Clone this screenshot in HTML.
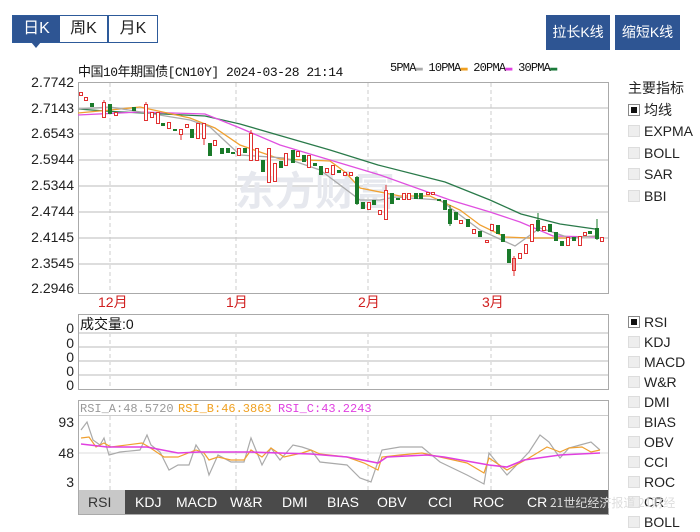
<!DOCTYPE html><html><head><meta charset="utf-8"><style>
body{margin:0;width:700px;height:532px;background:#fff;position:relative;overflow:hidden;font-family:"Liberation Sans","Noto Sans CJK SC",sans-serif;}
.a{position:absolute;white-space:nowrap}
.tab{position:absolute;top:15px;height:26px;border:1px solid #2d5a9a;background:#fff;color:#222;font-size:16px;line-height:26px;text-align:center}
.btn{position:absolute;top:15px;height:35px;background:#2e5593;color:#fff;font-size:14px;line-height:35px;text-align:center}
.yl{position:absolute;right:626px;font-size:14px;color:#222}
.cb{position:absolute;left:628px;font-size:14px;color:#222;line-height:16px}
.cb i{display:inline-block;width:10px;height:10px;background:#eee;border:1px solid #ddd;margin-right:4px;vertical-align:-1px}
.cb i.on{border-color:#888;box-shadow:inset 0 0 0 2px #fff;background-color:#111}
</style></head><body>
<div class="tab" style="left:12px;width:47px;background:#2e5593;color:#fff">日K</div>
<div class="a" style="left:31px;top:42px;width:0;height:0;border-left:5px solid transparent;border-right:5px solid transparent;border-top:6px solid #2e5593"></div>
<div class="tab" style="left:60px;width:47px;border-left:none">周K</div>
<div class="tab" style="left:108px;width:48px;border-left:1px solid #2d5a9a">月K</div>
<div class="btn" style="left:546px;width:64px">拉长K线</div>
<div class="btn" style="left:615px;width:65px">缩短K线</div>
<div class="a" style="left:78px;top:61px;font-size:13px;font-family:'Liberation Mono','Noto Sans CJK SC',monospace;color:#111;letter-spacing:-0.5px">中国10年期国债[CN10Y] 2024-03-28 21:14</div>
<div class="a" style="left:390px;top:61px;font-size:12px;font-family:'Liberation Mono',monospace;color:#111;letter-spacing:-0.8px">5PMA<span style="color:#aaa">▬</span> 10PMA<span style="color:#f0a020">▬</span> 20PMA<span style="color:#e040e0">▬</span> 30PMA<span style="color:#1a7a3a">▬</span></div>
<div class="a" style="left:628px;top:78px;font-size:14px;color:#222">主要指标</div>
<div class="cb" style="top:102px"><i class="on"></i>均线</div>
<div class="cb" style="top:123px"><i></i>EXPMA</div>
<div class="cb" style="top:145px"><i></i>BOLL</div>
<div class="cb" style="top:166px"><i></i>SAR</div>
<div class="cb" style="top:188px"><i></i>BBI</div>
<div class="yl" style="top:74px">2.7742</div><div class="yl" style="top:100px">2.7143</div><div class="yl" style="top:125px">2.6543</div><div class="yl" style="top:151px">2.5944</div><div class="yl" style="top:177px">2.5344</div><div class="yl" style="top:203px">2.4744</div><div class="yl" style="top:229px">2.4145</div><div class="yl" style="top:255px">2.3545</div><div class="yl" style="top:280px">2.2946</div>
<div class="a" style="left:98px;top:292px;color:#d02020;font-size:14px">12月</div>
<div class="a" style="left:226px;top:292px;color:#d02020;font-size:14px">1月</div>
<div class="a" style="left:358px;top:292px;color:#d02020;font-size:14px">2月</div>
<div class="a" style="left:482px;top:292px;color:#d02020;font-size:14px">3月</div>
<div class="yl" style="top:320px">0</div><div class="yl" style="top:335px">0</div><div class="yl" style="top:349px">0</div><div class="yl" style="top:363px">0</div><div class="yl" style="top:377px">0</div>
<div class="yl" style="top:414px">93</div><div class="yl" style="top:445px">48</div><div class="yl" style="top:474px">3</div>
<div class="cb" style="top:314px"><i class="on"></i>RSI</div>
<div class="cb" style="top:334px"><i></i>KDJ</div>
<div class="cb" style="top:354px"><i></i>MACD</div>
<div class="cb" style="top:374px"><i></i>W&amp;R</div>
<div class="cb" style="top:394px"><i></i>DMI</div>
<div class="cb" style="top:414px"><i></i>BIAS</div>
<div class="cb" style="top:434px"><i></i>OBV</div>
<div class="cb" style="top:454px"><i></i>CCI</div>
<div class="cb" style="top:474px"><i></i>ROC</div>
<div class="cb" style="top:494px"><i></i>CR</div>
<div class="cb" style="top:514px"><i></i>BOLL</div>
<svg class="a" style="left:0;top:0" width="700" height="532">
<g fill="none">
<rect x="78.5" y="82.5" width="530" height="211" stroke="#aaa"/>
<g stroke="#ddd" stroke-width="2"><line x1="79" y1="108" x2="608" y2="108"/><line x1="79" y1="134" x2="608" y2="134"/><line x1="79" y1="160" x2="608" y2="160"/><line x1="79" y1="186" x2="608" y2="186"/><line x1="79" y1="212" x2="608" y2="212"/><line x1="79" y1="238" x2="608" y2="238"/><line x1="79" y1="264" x2="608" y2="264"/></g>
<g stroke="#ccc" stroke-dasharray="4,3"><line x1="110" y1="83" x2="110" y2="293"/><line x1="236" y1="83" x2="236" y2="293"/><line x1="368" y1="83" x2="368" y2="293"/><line x1="491" y1="83" x2="491" y2="293"/>
<line x1="110" y1="333" x2="110" y2="389"/><line x1="236" y1="333" x2="236" y2="389"/><line x1="368" y1="333" x2="368" y2="389"/><line x1="491" y1="333" x2="491" y2="389"/>
<line x1="110" y1="416" x2="110" y2="490"/><line x1="236" y1="416" x2="236" y2="490"/><line x1="368" y1="416" x2="368" y2="490"/><line x1="491" y1="416" x2="491" y2="490"/></g>
</g>
<text x="235" y="205" font-size="40" font-weight="bold" fill="#e6e8ee" font-family="Noto Sans CJK SC,sans-serif">东方财富</text>
<g fill="none" stroke-width="1.3">
<polyline stroke="#2a7a4a" points="78,109 105,111 121,112 205,116 240,124 278,135 330,150 378,165 445,182 490,200 521,214 560,224 595,229"/>
<polyline stroke="#e050e0" points="78,115 140,112 205,114 240,128 280,145 330,160 380,175 450,200 490,212 520,222 553,236 595,237"/>
<polyline stroke="#f0a030" points="78,113 110,110 140,107 190,118 215,128 240,145 280,159 330,161 345,172 360,188 400,196 430,196 460,210 480,225 505,237 530,238 570,238 595,236"/>
<polyline stroke="#aaa" points="78,109 110,107 190,120 210,127 240,155 285,158 320,170 360,200 380,200 395,197 440,200 460,215 480,230 515,246 540,228 570,238 595,236"/>
</g>
<g fill="#fff" stroke="#e03030" stroke-width="1">
<rect x="79.5" y="92.5" width="3" height="3"/><rect x="84.5" y="97.5" width="3" height="3"/><rect x="102.5" y="102.5" width="3" height="15"/><rect x="114.5" y="112.5" width="3" height="3"/>
<rect x="144.5" y="104.5" width="3" height="16"/><rect x="150.5" y="112.5" width="3" height="5"/><rect x="156.5" y="112.5" width="3" height="11"/><rect x="167.5" y="122.5" width="3" height="6"/>
<rect x="179.5" y="129.5" width="3" height="5"/><rect x="185.5" y="124.5" width="3" height="3"/><rect x="196.5" y="123.5" width="3" height="15"/><rect x="202.5" y="123.5" width="3" height="15"/>
<rect x="213.5" y="140.5" width="3" height="5"/><rect x="237.5" y="148.5" width="3" height="7"/><rect x="249.5" y="133.5" width="3" height="27"/><rect x="255.5" y="148.5" width="3" height="12"/>
<rect x="267.5" y="148.5" width="3" height="34"/><rect x="273.5" y="163.5" width="3" height="18"/><rect x="284.5" y="153.5" width="3" height="12"/><rect x="296.5" y="151.5" width="3" height="5"/>
<rect x="307.5" y="155.5" width="3" height="12"/><rect x="325.5" y="168.5" width="3" height="4"/><rect x="331.5" y="165.5" width="3" height="9"/><rect x="343.5" y="172.5" width="3" height="3"/><rect x="349.5" y="172.5" width="3" height="3"/>
<rect x="367.5" y="202.5" width="3" height="7"/><rect x="378.5" y="210.5" width="3" height="4"/><rect x="384.5" y="190.5" width="3" height="29"/><rect x="402.5" y="193.5" width="3" height="6"/><rect x="407.5" y="193.5" width="3" height="6"/>
<rect x="426.5" y="192.5" width="3" height="2"/><rect x="431.5" y="192.5" width="3" height="2"/><rect x="459.5" y="220.5" width="3" height="3"/><rect x="472.5" y="229.5" width="3" height="4"/><rect x="485.5" y="240.5" width="3" height="2"/>
<rect x="490.5" y="224.5" width="3" height="6"/><rect x="512.5" y="258.5" width="3" height="12"/><rect x="518.5" y="253.5" width="3" height="5"/><rect x="524.5" y="244.5" width="3" height="9"/><rect x="530.5" y="224.5" width="3" height="17"/>
<rect x="542.5" y="226.5" width="3" height="4"/><rect x="566.5" y="237.5" width="3" height="8"/><rect x="578.5" y="236.5" width="3" height="9"/><rect x="583.5" y="232.5" width="3" height="3"/><rect x="600.5" y="237.5" width="3" height="4"/>
</g>
<g stroke="#e03030"><line x1="104" y1="100" x2="104" y2="102"/><line x1="146" y1="102" x2="146" y2="104"/><line x1="181" y1="134" x2="181" y2="140"/><line x1="204" y1="138" x2="204" y2="145"/><line x1="514" y1="256" x2="514" y2="276"/><line x1="514" y1="270" x2="514" y2="276"/><line x1="386" y1="185" x2="386" y2="190"/><line x1="251" y1="130" x2="251" y2="133"/></g>
<g fill="#1a7a2a">
<rect x="90" y="103" width="4" height="4"/><rect x="108" y="104" width="4" height="10"/><rect x="132" y="107" width="4" height="4"/><rect x="161" y="123" width="4" height="3"/><rect x="173" y="129" width="4" height="2"/>
<rect x="190" y="129" width="4" height="9"/><rect x="208" y="143" width="4" height="13"/><rect x="220" y="148" width="4" height="6"/><rect x="226" y="148" width="4" height="5"/><rect x="231" y="152" width="4" height="2"/><rect x="243" y="148" width="4" height="5"/>
<rect x="261" y="160" width="4" height="12"/><rect x="279" y="161" width="4" height="7"/><rect x="291" y="150" width="4" height="13"/><rect x="302" y="155" width="4" height="7"/><rect x="313" y="163" width="4" height="3"/><rect x="319" y="166" width="4" height="9"/>
<rect x="337" y="170" width="4" height="3"/><rect x="355" y="177" width="4" height="27"/><rect x="361" y="202" width="4" height="7"/><rect x="372" y="200" width="4" height="5"/><rect x="390" y="193" width="4" height="11"/><rect x="396" y="198" width="4" height="2"/><rect x="414" y="193" width="4" height="6"/><rect x="419" y="193" width="4" height="6"/>
<rect x="437" y="199" width="4" height="2"/><rect x="443" y="200" width="4" height="10"/><rect x="448" y="209" width="4" height="15"/><rect x="454" y="212" width="4" height="8"/><rect x="466" y="219" width="4" height="8"/><rect x="478" y="231" width="4" height="6"/>
<rect x="496" y="225" width="4" height="9"/><rect x="501" y="234" width="4" height="8"/><rect x="507" y="249" width="4" height="14"/><rect x="536" y="220" width="4" height="11"/><rect x="548" y="224" width="4" height="8"/><rect x="554" y="232" width="4" height="9"/>
<rect x="560" y="241" width="4" height="5"/><rect x="572" y="237" width="4" height="4"/><rect x="588" y="231" width="4" height="3"/><rect x="595" y="228" width="4" height="11"/>
</g>
<g stroke="#1a7a2a"><line x1="538" y1="213" x2="538" y2="232"/><line x1="597" y1="219" x2="597" y2="240"/><line x1="357" y1="176" x2="357" y2="205"/><line x1="450" y1="205" x2="450" y2="226"/></g>
<rect x="78.5" y="314.5" width="530" height="75" fill="none" stroke="#aaa"/>
<g stroke="#ddd" stroke-width="2"><line x1="79" y1="333" x2="608" y2="333"/><line x1="79" y1="347" x2="608" y2="347"/><line x1="79" y1="361" x2="608" y2="361"/><line x1="79" y1="375" x2="608" y2="375"/></g>
<text x="80" y="329" font-size="14" fill="#111" font-family="Liberation Sans,Noto Sans CJK SC,sans-serif">成交量:0</text>
<rect x="78.5" y="400.5" width="530" height="114" fill="none" stroke="#aaa"/>
<line x1="79" y1="415.5" x2="608" y2="415.5" stroke="#ccc"/>
<g stroke="#ddd"><line x1="79" y1="453" x2="608" y2="453"/></g>
<text y="412" font-size="12" font-family="Liberation Mono,monospace"><tspan x="80" fill="#999">RSI_A:48.5720</tspan><tspan x="178" fill="#f0a020">RSI_B:46.3863</tspan><tspan x="278" fill="#e040e0">RSI_C:43.2243</tspan></text>
<g fill="none" stroke-width="1.2">
<polyline stroke="#aaa" points="81,430 87,422 93,440 100,445 104,438 109,455 120,452 140,450 147,435 151,445 160,452 169,470 178,465 189,465 196,445 204,457 209,475 218,455 231,462 244,462 251,438 262,465 271,448 280,460 293,445 302,447 311,450 320,462 347,465 360,478 371,482 382,450 400,447 422,447 440,462 467,475 484,484 489,453 507,475 529,452 540,435 549,442 560,458 569,448 580,445 591,442 600,450"/>
<polyline stroke="#f0a030" points="81,438 89,437 96,447 104,443 111,447 142,443 149,447 164,457 178,457 196,450 204,453 209,460 218,457 231,460 244,460 251,450 262,457 271,448 284,457 302,453 311,450 320,454 347,457 364,463 378,470 382,457 400,455 422,453 440,457 467,463 484,473 489,458 507,470 529,458 547,447 560,452 569,448 582,447 591,452 600,450"/>
<polyline stroke="#e040e0" stroke-width="1.6" points="81,444 107,447 147,447 178,453 200,452 249,452 311,454 347,457 378,463 387,457 427,455 444,457 489,465 507,467 524,460 560,455 600,453"/>
</g>
<rect x="79" y="490" width="529" height="24" fill="#4a4a4a"/>
<rect x="79" y="490" width="46" height="24" fill="#c8c8c8"/>
<g font-size="14" font-family="Liberation Sans,sans-serif" fill="#fff"><text x="88" y="507" fill="#333">RSI</text><text x="135" y="507">KDJ</text><text x="176" y="507">MACD</text><text x="230" y="507">W&amp;R</text><text x="282" y="507">DMI</text><text x="327" y="507">BIAS</text><text x="377" y="507">OBV</text><text x="428" y="507">CCI</text><text x="473" y="507">ROC</text><text x="527" y="507">CR</text></g>
<text x="550" y="507" font-size="12" fill="#ddd" font-family="Noto Sans CJK SC,sans-serif">21世纪经济报道 21财经</text>
</svg>
</body></html>
